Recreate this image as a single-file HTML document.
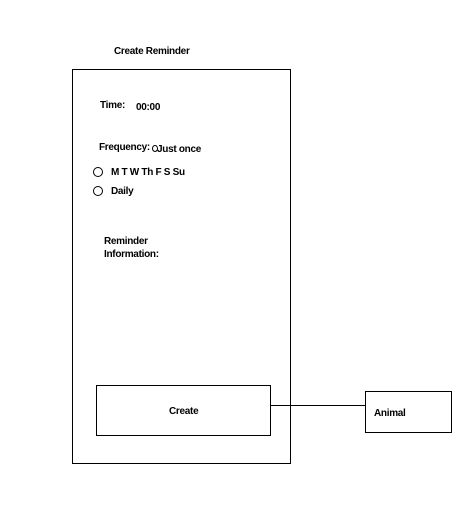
<!DOCTYPE html>
<html><head><style>
body{margin:0;width:459px;height:522px;background:#fff;position:relative;overflow:hidden;font-family:"Liberation Sans",sans-serif;font-weight:bold;font-size:10px;color:#000}
.t{position:absolute;white-space:nowrap;line-height:12px;letter-spacing:-0.3px}
.b{position:absolute;border:1px solid #000;box-sizing:border-box}
.c{position:absolute;width:10px;height:10px;border:1px solid #000;border-radius:50%;box-sizing:border-box}
</style></head><body>
<div class="t" style="left:114px;top:46px">Create Reminder</div>
<div class="b" style="left:72px;top:69px;width:219px;height:395px"></div>
<div class="t" style="left:100px;top:100px">Time:</div>
<div class="t" style="left:136px;top:102px">00:00</div>
<div class="t" style="left:99px;top:142px">Frequency:</div>
<div class="c" style="left:152px;top:145px;width:6px;height:7px"></div>
<div class="t" style="left:157px;top:144px">Just once</div>
<div class="c" style="left:93px;top:167px"></div>
<div class="t" style="left:111px;top:167px">M T W Th F S Su</div>
<div class="c" style="left:93px;top:186px"></div>
<div class="t" style="left:111px;top:186px">Daily</div>
<div class="t" style="left:104px;top:236px">Reminder</div>
<div class="t" style="left:104px;top:249px">Information:</div>
<div class="b" style="left:96px;top:385px;width:175px;height:51px"></div>
<div class="t" style="left:169px;top:406px">Create</div>
<div style="position:absolute;left:271px;top:405px;width:94px;height:1px;background:#000"></div>
<div class="b" style="left:365px;top:391px;width:87px;height:42px"></div>
<div class="t" style="left:374px;top:408px">Animal</div>
</body></html>
